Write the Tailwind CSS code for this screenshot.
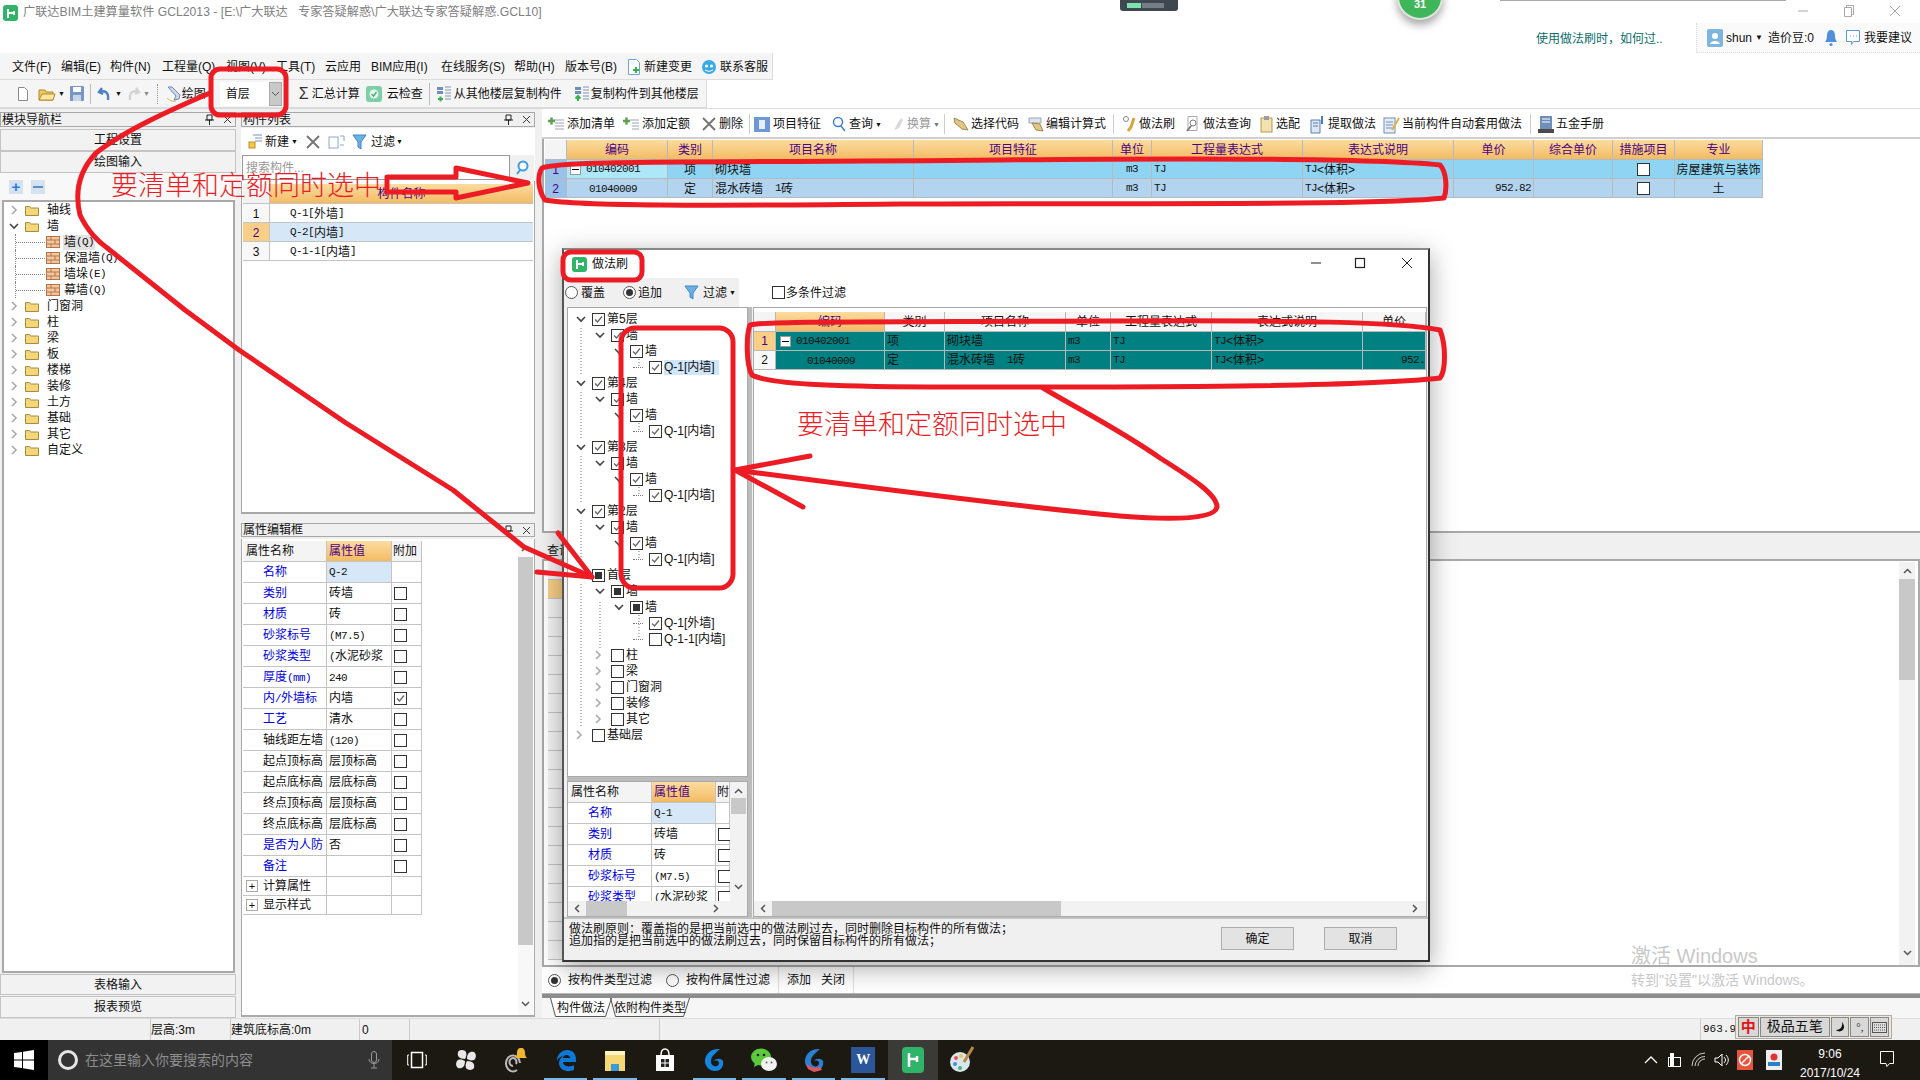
<!DOCTYPE html>
<html lang="zh">
<head>
<meta charset="UTF-8">
<title>广联达BIM土建算量软件 GCL2013</title>
<script src="https://cdn.jsdelivr.net/npm/@tailwindcss/browser@4"></script>
</head>
<body class="w-[1920px] h-[1080px] overflow-hidden relative bg-white text-[12px] leading-none text-[#111] font-['Liberation_Sans','Noto_Sans_CJK_SC',sans-serif]">

<!-- title bar -->
<div class="h-[53px] flex items-start relative">
  <div class="mt-[5px] ml-[3px] w-[15px] h-[16px] rounded-[3px] bg-[#2fb468] flex items-center justify-center">
    <svg width="10" height="11" viewBox="0 0 10 11"><path d="M2 1v9M2 5h6M8 3v4" stroke="#fff" stroke-width="2" fill="none"/></svg>
  </div>
  <div class="ml-[5px] mt-[6px] text-[#808080] text-[12.2px] whitespace-pre">广联达BIM土建算量软件 GCL2013 - [E:\广大联达   专家答疑解惑\广大联达专家答疑解惑.GCL10]</div>
  <!-- window buttons -->
  <div class="absolute top-[4px] left-[1796px] flex items-center gap-[33px] text-[#909090]">
    <svg width="14" height="14" viewBox="0 0 14 14"><path d="M2 7h10" stroke="#aaa"/></svg>
    <svg width="12" height="14" viewBox="0 0 12 14"><path d="M1.500 3.500h7v9h-7zM3.500 3.500v-2h7v9h-2" stroke="#aaa" fill="none"/></svg>
    <svg width="14" height="14" viewBox="0 0 14 14"><path d="M2 2l10 10M12 2L2 12" stroke="#aaa"/></svg>
  </div>
  <div class="absolute left-[1536px] top-[33px] text-[#0c6e6e]">使用做法刷时，如何过..</div>
  <div class="absolute left-[1696px] top-[23px] w-[224px] h-[30px] bg-[#fafafa] border-b border-[#ddd] border-l border-dotted flex items-center pl-[10px] gap-[3px]">
    <svg width="16" height="18" viewBox="0 0 16 18"><rect width="16" height="18" rx="2" fill="#7db5df"/><circle cx="8" cy="7" r="3" fill="#fff"/><path d="M3 15c1-4 9-4 10 0z" fill="#fff"/></svg>
    <span>shun</span><span class="text-[8px]">▼</span><span class="ml-[2px]">造价豆:0</span>
    <svg class="ml-[7px]" width="14" height="18" viewBox="0 0 14 18"><path d="M7 1c3 0 4 3 4 6s1 4 2 6H1c1-2 2-3 2-6s1-6 4-6z" fill="#4f8fdc"/><circle cx="7" cy="15.500" r="1.600" fill="#4f8fdc"/></svg>
    <svg class="ml-[4px]" width="16" height="18" viewBox="0 0 16 18"><path d="M1.500 1.500h13v11h-6l-2 3v-3h-5z" fill="#fff" stroke="#5a9ad8"/><path d="M5 7h1M8 7h1M11 7h1" stroke="#5a9ad8"/></svg>
    <span>我要建议</span>
  </div>
  <!-- desktop widgets poking in at the top -->
  <div class="absolute left-[1120px] top-0 w-[58px] h-[11px] bg-[#3f4750] rounded-b-[3px] flex items-center pl-[7px] gap-[1px]">
    <div class="w-[14px] h-[5px] bg-[#7fe0b0]"></div><div class="w-[22px] h-[5px] bg-[#767d85]"></div>
  </div>
  <div class="absolute left-[1397px] top-[-26px] w-[46px] h-[46px] rounded-full bg-[#3fb65a] border-[2px] border-[#dfe5df] shadow-[0_5px_8px_rgba(0,0,0,0.35)] flex items-end justify-center pb-[8px] text-white text-[11px] font-bold">31</div>
  <div class="absolute left-[1500px] top-0 w-[286px] h-[1px] bg-[#aaa]"></div>
</div>

<!-- menu bar -->
<div class="h-[27px] w-[773px] bg-[#f5f5f5] border-b border-r border-[#dcdcdc] flex items-center pl-[12px] pt-[2px]">
  <span class="w-[49px]">文件(F)</span><span class="w-[49px]">编辑(E)</span><span class="w-[52px]">构件(N)</span><span class="w-[64px]">工程量(Q)</span><span class="w-[50px]">视图(V)</span><span class="w-[49px]">工具(T)</span><span class="w-[46px]">云应用</span><span class="w-[70px]">BIM应用(I)</span><span class="w-[73px]">在线服务(S)</span><span class="w-[51px]">帮助(H)</span><span class="w-[62px]">版本号(B)</span>
  <svg width="14" height="18" viewBox="0 0 14 18"><path d="M1.500 1.500h8l3 3v12h-11z" fill="#fff" stroke="#6aa4d8"/><path d="M6 12h6M9 9v6" stroke="#35b04a" stroke-width="2"/></svg>
  <span class="ml-[3px] w-[57px]">新建变更</span>
  <svg width="16" height="17" viewBox="0 0 16 17"><circle cx="8" cy="8" r="7" fill="#39a9e8"/><circle cx="5.500" cy="7" r="1.600" fill="#fff"/><circle cx="10.500" cy="7" r="1.600" fill="#fff"/><path d="M4 11q4 3 8 0" stroke="#fff" fill="none"/></svg>
  <span class="ml-[3px]">联系客服</span>
</div>

<!-- main toolbar -->
<div class="h-[28px] w-[707px] bg-[#f5f5f5] border-r border-b border-[#dcdcdc] flex items-center pl-[16px]">
  <svg width="14" height="16" viewBox="0 0 14 16"><path d="M2.500 1.500h6l3 3v10h-9z" fill="#fff" stroke="#8a8a8a"/></svg>
  <svg class="ml-[8px]" width="18" height="16" viewBox="0 0 18 16"><path d="M1 4h6l1 2h7v8H1z" fill="#f0c95c" stroke="#b08a2a"/><path d="M4 8h13l-2 6H1z" fill="#fbe7a0" stroke="#b08a2a"/></svg>
  <span class="text-[7px] ml-[2px]">▼</span>
  <svg class="ml-[5px]" width="14" height="15" viewBox="0 0 14 15"><rect width="14" height="15" rx="1" fill="#7b95c4"/><rect x="3" y="1" width="8" height="5" fill="#fff"/><rect x="3" y="9" width="8" height="6" fill="#c7d4ea"/></svg>
  <div class="w-[1px] h-[20px] bg-[#bbb] ml-[6px]"></div>
  <svg class="ml-[6px]" width="15" height="16" viewBox="0 0 15 16"><path d="M5 2L2 6l4 2M2 6c6-2 10 0 9 8" stroke="#4e80c8" stroke-width="2.400" fill="none"/></svg>
  <span class="text-[7px] ml-[3px]">▼</span>
  <svg class="ml-[5px]" width="14" height="16" viewBox="0 0 14 16"><path d="M9 2l3 4-4 2M12 6C6 4 2 6 3 14" stroke="#d4d4d4" stroke-width="2.400" fill="none"/></svg>
  <span class="text-[7px] ml-[2px] text-[#888]">▼</span>
  <div class="w-[1px] h-[20px] border-l border-dotted border-[#999] ml-[7px]"></div>
  <svg class="ml-[7px]" width="18" height="18" viewBox="0 0 18 18"><path d="M3 2l8 9-2 4 5-1 1-4-8-8z" fill="#cdd9ea" stroke="#6d8ab0"/><path d="M2 13c2 2 5 4 9 3" stroke="#e0b050" fill="none"/></svg>
  <span class="ml-[-1px] w-[24px]">绘图</span>
  <div class="w-[64px] h-[24px] bg-white flex items-center pl-[6px] relative ml-[14px]">首层
    <div class="absolute right-[2px] top-[0px] w-[13px] h-[24px] bg-[#c9c9c9] border border-[#aaa] flex items-center justify-center"><svg width="9" height="6" viewBox="0 0 9 6"><path d="M1 1l3.500 3.500L8 1" stroke="#555" fill="none"/></svg></div>
  </div>
  <span class="ml-[15px] text-[16px] text-[#333] w-[13px]">Σ</span>
  <span class="ml-[0px]">汇总计算</span>
  <svg class="ml-[6px]" width="16" height="16" viewBox="0 0 16 16"><rect width="16" height="16" rx="3" fill="#7fcfa6"/><circle cx="8" cy="8" r="4.500" fill="#e9f7ef"/><path d="M5.500 8l2 2 3-4" stroke="#4ab27d" fill="none" stroke-width="1.500"/></svg>
  <span class="ml-[5px]">云检查</span>
  <div class="w-[1px] h-[22px] bg-[#bbb] ml-[6px]"></div>
  <svg class="ml-[6px]" width="16" height="18" viewBox="0 0 16 18"><path d="M1 2h6v3H1zM1 6h6v3H1z" fill="#6e8fb8"/><path d="M9 2h6M9 5h6M9 8h6M9 11h6M9 14h6" stroke="#7f97b8"/><path d="M2 14h5M4.500 11.500v5" stroke="#3bb04e" stroke-width="2"/></svg>
  <span class="ml-[2px]">从其他楼层复制构件</span>
  <svg class="ml-[12px]" width="16" height="18" viewBox="0 0 16 18"><path d="M1 2h6v3H1zM1 6h6v3H1z" fill="#6e8fb8"/><path d="M9 2h6M9 5h6M9 8h6M9 11h6M9 14h6" stroke="#7f97b8"/><path d="M4 16v-5M1.500 13.500L4 11l2.500 2.500" stroke="#3bb04e" stroke-width="2" fill="none"/></svg>
  <span class="ml-[1px]">复制构件到其他楼层</span>
</div>

<!-- work area -->
<div class="h-[910px] flex bg-[#f0f0f0] border-t border-[#d9d9d9]">

  <!-- module nav -->
  <div class="w-[236px] flex flex-col pt-[3px]">
    <div class="h-[15px] border border-[#a8a8a8] flex items-center justify-between pl-[1px] pr-[3px]">
      <span>模块导航栏</span>
      <span class="flex items-center gap-[9px]"><svg width="9" height="11" viewBox="0 0 9 11"><path d="M2 1h5v5H2zM0 6h9M4.500 6v5" stroke="#222" fill="none"/></svg><svg width="9" height="9" viewBox="0 0 9 9"><path d="M1 1l7 7M8 1L1 8" stroke="#333"/></svg></span>
    </div>
    <div class="h-[22px] mt-[2px] border border-[#c4c4c4] bg-[#f2f2f2] flex items-center justify-center">工程设置</div>
    <div class="h-[22px] border border-[#c4c4c4] bg-[#f2f2f2] flex items-center justify-center">绘图输入</div>
    <div class="h-[27px] flex items-center pl-[9px] gap-[8px] bg-[#f8f8f8]">
      <div class="w-[14px] h-[14px] bg-[#d5e2f2] text-[#2a7fd6] flex items-center justify-center text-[15px] font-bold">+</div>
      <div class="w-[14px] h-[14px] bg-[#d5e2f2] flex items-center justify-center"><div class="w-[10px] h-[2px] bg-[#5f8fc4]"></div></div>
    </div>
    <div id="nav-tree" class="h-[773px] ml-[2px] mr-[1px] bg-white border-2 border-[#a9a9a9]"></div>
    <div class="h-[21px] mt-[1px] border border-[#c4c4c4] bg-[#f2f2f2] flex items-center justify-center">表格输入</div>
    <div class="h-[22px] mt-[1px] border border-[#c4c4c4] bg-[#f2f2f2] flex items-center justify-center">报表预览</div>
  </div>

  <!-- component list and properties -->
  <div class="w-[294px] ml-[5px] flex flex-col pt-[3px]">
    <div class="h-[15px] border border-[#a8a8a8] flex items-center justify-between pl-[1px] pr-[3px]">
      <span>构件列表</span>
      <span class="flex items-center gap-[9px]"><svg width="9" height="11" viewBox="0 0 9 11"><path d="M2 1h5v5H2zM0 6h9M4.500 6v5" stroke="#222" fill="none"/></svg><svg width="9" height="9" viewBox="0 0 9 9"><path d="M1 1l7 7M8 1L1 8" stroke="#333"/></svg></span>
    </div>
    <div class="h-[27px] mt-[1px] bg-white flex items-center pl-[7px]">
      <svg width="16" height="18" viewBox="0 0 16 18"><path d="M5 2h9M7 5h7M7 8h7" stroke="#7592b8"/><rect x="1" y="9" width="6" height="6" fill="#f2c84b" stroke="#b98f22"/></svg>
      <span class="ml-[1px]">新建</span><span class="text-[7px] ml-[2px]">▼</span>
      <svg class="ml-[8px]" width="14" height="14" viewBox="0 0 14 14"><path d="M1 1l12 12M13 1L1 13" stroke="#777" stroke-width="2"/></svg>
      <svg class="ml-[8px]" width="17" height="16" viewBox="0 0 17 16"><rect x="1" y="3" width="9" height="11" fill="#fff" stroke="#8ba7c8"/><path d="M12 2h4M16 2v5M12 11h4" stroke="#8ba7c8"/></svg>
      <svg class="ml-[7px]" width="15" height="16" viewBox="0 0 15 16"><path d="M1 1h13L9 8v7l-3-2V8z" fill="#6cb0e8" stroke="#3d86c6"/></svg>
      <span class="ml-[4px]">过滤</span><span class="text-[7px] ml-[1px]">▼</span>
    </div>
    <div class="h-[26px] bg-white flex items-stretch pb-[1px]">
      <div class="w-[268px] ml-[1px] border border-[#999] text-[#999] flex items-center pl-[3px] bg-white">搜索构件...</div>
      <div class="w-[24px] bg-[#f0f0f0] flex items-center justify-center"><svg width="14" height="16" viewBox="0 0 14 16"><circle cx="8" cy="6" r="4.500" fill="#fff" stroke="#3e9ee0" stroke-width="2"/><path d="M5 10l-3 4" stroke="#3e9ee0" stroke-width="2"/></svg></div>
    </div>
    <div class="h-[333px] bg-white border-b-2 border-x border-[#a9a9a9] px-[1px] pt-[3px]">
      <div class="grid grid-cols-[27px_1fr] text-center">
        <div class="h-[20px] bg-[#f2f2f2] border-r border-b border-[#c4c4c4]"></div>
        <div class="h-[20px] bg-gradient-to-b from-[#fbdc9f] to-[#f3bb62] border-b border-[#c4c4c4] flex items-center justify-center text-[#4b0082]">构件名称</div>
        <div class="h-[19px] bg-[#f8f8f8] border-r border-b border-[#c4c4c4] flex items-center justify-center pt-[1px]">1</div>
        <div class="h-[19px] bg-white border-b border-[#c4c4c4] flex items-center text-left pl-[20px] pt-[1px]"><span class="font-['Liberation_Mono'] text-[11px] tracking-[-0.6px]">Q-1[</span>外墙<span class="font-['Liberation_Mono'] text-[11px]">]</span></div>
        <div class="h-[19px] bg-[#f9cf87] border-r border-b border-[#c4c4c4] flex items-center justify-center text-[#4b0082] pt-[1px]">2</div>
        <div class="h-[19px] bg-[#d6e8f7] border-b border-[#c4c4c4] flex items-center pl-[20px] pt-[1px]"><span class="font-['Liberation_Mono'] text-[11px] tracking-[-0.6px]">Q-2[</span>内墙<span class="font-['Liberation_Mono'] text-[11px]">]</span></div>
        <div class="h-[19px] bg-[#f8f8f8] border-r border-b border-[#c4c4c4] flex items-center justify-center pt-[1px]">3</div>
        <div class="h-[19px] bg-white border-b border-[#c4c4c4] flex items-center pl-[20px] pt-[1px]"><span class="font-['Liberation_Mono'] text-[11px] tracking-[-0.6px]">Q-1-1[</span>内墙<span class="font-['Liberation_Mono'] text-[11px]">]</span></div>
      </div>
    </div>
    <div class="h-[14px] mt-[9px] border border-[#a8a8a8] flex items-center justify-between pl-[1px] pr-[3px]">
      <span>属性编辑框</span>
      <span class="flex items-center gap-[9px]"><svg width="9" height="11" viewBox="0 0 9 11"><path d="M2 1h5v5H2zM0 6h9M4.500 6v5" stroke="#222" fill="none"/></svg><svg width="9" height="9" viewBox="0 0 9 9"><path d="M1 1l7 7M8 1L1 8" stroke="#333"/></svg></span>
    </div>
    <div class="flex-1 mt-[2px] bg-white border-x border-b-2 border-[#a9a9a9] pl-[1px] pt-[2px] flex relative mb-[1px]">
      <div id="prop-main" class="w-[179px]"></div>
      <div class="absolute right-[1px] top-0 bottom-0 w-[15px] bg-[#f8f8f8] flex flex-col items-center">
        <svg class="mt-[7px]" width="9" height="6" viewBox="0 0 9 6"><path d="M1 5l3.500-3.500L8 5" stroke="#555" stroke-width="1.500" fill="none"/></svg>
        <div class="w-[15px] h-[388px] mt-[5px] bg-[#c8c8c8]"></div>
        <svg class="mt-[56px]" width="9" height="6" viewBox="0 0 9 6"><path d="M1 1l3.500 3.500L8 1" stroke="#555" stroke-width="1.500" fill="none"/></svg>
      </div>
    </div>
  </div>

  <!-- quantity panels -->
  <div class="flex-1 ml-[7px] flex flex-col bg-[#f0f0f0]">
    <div class="h-[30px] bg-white border-b-2 border-[#cfcfcf] flex items-center pl-[5px] pt-[2px]">
      <svg width="17" height="16" viewBox="0 0 17 16"><path d="M5 4h12M8 7h9M8 10h9M8 13h9" stroke="#98a6b8"/><path d="M1 5h7M4.500 1.500v7" stroke="#5ea04e" stroke-width="2.500"/></svg>
      <span class="ml-[3px]">添加清单</span>
      <svg class="ml-[8px]" width="16" height="16" viewBox="0 0 16 16"><path d="M7 4h9M9 7h7M9 10h7M9 13h7" stroke="#98a6b8"/><path d="M0 5h7M3.500 1.500v7" stroke="#5ea04e" stroke-width="2.500"/></svg>
      <span class="ml-[3px]">添加定额</span>
      <svg class="ml-[12px]" width="14" height="14" viewBox="0 0 14 14"><path d="M1 1l12 12M13 1L1 13" stroke="#777" stroke-width="2"/></svg>
      <span class="ml-[3px]">删除</span>
      <div class="w-[1px] h-[20px] bg-[#ccc] ml-[6px]"></div>
      <svg class="ml-[4px]" width="16" height="15" viewBox="0 0 16 15"><rect width="16" height="15" fill="#6d97d6"/><rect x="5" y="3" width="6" height="9" fill="#e8eef8"/></svg>
      <span class="ml-[3px]">项目特征</span>
      <svg class="ml-[11px]" width="15" height="16" viewBox="0 0 15 16"><circle cx="6" cy="6" r="4.500" fill="none" stroke="#3d7fd0" stroke-width="1.500"/><path d="M9 10l4 5" stroke="#3d7fd0" stroke-width="1.500"/></svg>
      <span class="ml-[2px]">查询</span><span class="text-[7px] ml-[2px]">▼</span>
      <svg class="ml-[10px]" width="13" height="14" viewBox="0 0 13 14"><path d="M2 13l5-9 2-3 2 2-4 8z" fill="#d8d8d8"/></svg>
      <span class="ml-[2px] text-[#999]">换算</span><span class="text-[7px] ml-[2px] text-[#777]">▼</span>
      <div class="w-[1px] h-[20px] bg-[#ccc] ml-[4px]"></div>
      <svg class="ml-[7px]" width="18" height="16" viewBox="0 0 18 16"><path d="M2 2l9 4 5 8-6-1-7-6z" fill="#e4c680" stroke="#9a8a5a"/></svg>
      <span class="ml-[1px]">选择代码</span>
      <svg class="ml-[9px]" width="17" height="16" viewBox="0 0 17 16"><path d="M1 2h12v5H1z" fill="#dfe4ea" stroke="#9aa7b6"/><path d="M4 7l8 1 3 7-7-1z" fill="#e4c680" stroke="#9a8a5a"/></svg>
      <span class="ml-[1px]">编辑计算式</span>
      <div class="w-[1px] h-[20px] bg-[#ccc] ml-[7px]"></div>
      <svg class="ml-[7px]" width="17" height="18" viewBox="0 0 17 18"><circle cx="5" cy="4" r="2.500" fill="#fff" stroke="#888"/><path d="M13 3l-3 9-3 4" stroke="#d3a93f" stroke-width="3" fill="none"/></svg>
      <span class="ml-[1px]">做法刷</span>
      <svg class="ml-[10px]" width="16" height="18" viewBox="0 0 16 18"><path d="M3 1.500h9v14h-9z" fill="#fff" stroke="#aaa"/><circle cx="8" cy="8" r="3" fill="none" stroke="#7a7a7a"/><path d="M6 11l-4 5" stroke="#7a7a7a" stroke-width="2"/></svg>
      <span class="ml-[2px]">做法查询</span>
      <svg class="ml-[8px]" width="15" height="18" viewBox="0 0 15 18"><rect x="2" y="3" width="11" height="14" fill="#f2e2b0" stroke="#b59a50"/><rect x="5" y="1" width="5" height="4" fill="#9c9c9c"/></svg>
      <span class="ml-[2px]">选配</span>
      <svg class="ml-[9px]" width="17" height="19" viewBox="0 0 17 19"><path d="M2 5h9v13H2z" fill="#dde6f3" stroke="#5d7fb0"/><path d="M4 8h5M4 11h5" stroke="#5d7fb0"/><path d="M13 1v8" stroke="#3d7fd0" stroke-width="2"/></svg>
      <span class="ml-[2px]">提取做法</span>
      <svg class="ml-[7px]" width="18" height="19" viewBox="0 0 18 19"><rect x="1" y="3" width="11" height="15" fill="#e8eef8" stroke="#6d8fc0"/><path d="M3 7h7M3 10h7M3 13h7" stroke="#6d8fc0"/><path d="M9 15l7-12" stroke="#e0b040" stroke-width="2"/></svg>
      <span class="ml-[1px]">当前构件自动套用做法</span>
      <div class="w-[1px] h-[20px] bg-[#ccc] ml-[8px]"></div>
      <svg class="ml-[7px]" width="16" height="19" viewBox="0 0 16 19"><rect x="2" y="1" width="12" height="17" fill="#6f8fb8"/><path d="M4 4h8M4 7h8" stroke="#fff"/><rect x="0" y="14" width="16" height="4" fill="#4a4a4a"/></svg>
      <span class="ml-[2px]">五金手册</span>
    </div>
    <div class="h-[394px] bg-white border-b-2 border-l-2 border-[#a9a9a9] pl-[1px] pt-[1px]">
      <div id="top-grid" class="grid grid-cols-[22px_101px_45px_201px_199px_39px_151px_151px_80px_79px_62px_88px] w-[1218px]"></div>
    </div>
    <div class="h-[26px] flex items-end"><span class="ml-[5px] mb-[2px]">查询</span></div>
    <div class="h-[408px] bg-white border-2 border-[#a9a9a9] relative">
      <div id="low-grid" class="w-[785px] ml-[4px] grid grid-cols-[16px_769px]"></div>
      <div class="absolute right-[3px] top-[1px] bottom-0 w-[16px] bg-[#f2f2f2] flex flex-col items-center">
        <svg class="mt-[6px]" width="9" height="6" viewBox="0 0 9 6"><path d="M1 5l3.500-3.500L8 5" stroke="#555" stroke-width="1.500" fill="none"/></svg>
        <div class="w-[16px] h-[101px] mt-[5px] bg-[#c8c8c8]"></div>
        <svg class="mt-[270px]" width="9" height="6" viewBox="0 0 9 6"><path d="M1 1l3.500 3.500L8 1" stroke="#555" stroke-width="1.500" fill="none"/></svg>
      </div>
    </div>
    <div class="h-[26px] bg-white flex items-center pl-[6px]">
      <div class="w-[13px] h-[13px] rounded-full border border-[#555] flex items-center justify-center"><div class="w-[7px] h-[7px] rounded-full bg-[#333]"></div></div>
      <span class="ml-[7px]">按构件类型过滤</span>
      <div class="ml-[14px] w-[13px] h-[13px] rounded-full border border-[#555]"></div>
      <span class="ml-[7px]">按构件属性过滤</span>
      <div class="ml-[8px] h-[26px] w-[1px] bg-[#ddd]"></div>
      <span class="ml-[8px]">添加</span>
      <span class="ml-[10px]">关闭</span>
      <div class="ml-[8px] h-[26px] w-[1px] bg-[#ddd]"></div>
    </div>
    <div class="h-[5px] bg-[#8d8d8d] border-t border-[#b5b5b5]"></div>
    <div class="flex-1 bg-[#f6f6f6] flex items-stretch pl-[8px]">
      <div class="w-[62px] relative flex items-center justify-center">
        <svg class="absolute left-0 top-0" width="62" height="19" viewBox="0 0 62 19"><path d="M.5 0l5 18.500h50l6-18.500" fill="#fff" stroke="#555"/></svg>
        <span class="relative">构件做法</span>
      </div>
      <div class="w-[80px] ml-[-2px] relative flex items-center justify-center">
        <svg class="absolute left-0 top-0" width="80" height="19" viewBox="0 0 80 19"><path d="M.5 0l5 18.500h68l6-18.500" fill="none" stroke="#555"/></svg>
        <span class="relative">依附构件类型</span>
      </div>
    </div>
  </div>
</div>

<!-- status bar -->
<div class="h-[22px] bg-[#f0f0f0] border-t border-[#ddd] flex items-stretch">
  <div class="w-[150px]"></div>
  <div class="w-[80px] border-l border-[#ccc] flex items-center">层高:3m</div>
  <div class="w-[129px] border-l border-[#ccc] flex items-center">建筑底标高:0m</div>
  <div class="w-[50px] border-l border-[#ccc] flex items-center pl-[2px]">0</div>
  <div class="w-[250px] border-l border-[#ccc]"></div>
  <div class="w-[1041px] border-l border-[#ccc]"></div>
  <div class="border-l border-[#ccc] flex items-center pl-[2px] font-['Liberation_Mono'] text-[11px]">963.9E</div>
</div>

<!-- taskbar -->
<div class="h-[40px] bg-[#1c1812] flex items-stretch relative text-white">
  <div class="w-[48px] bg-black flex items-center justify-center">
    <svg width="20" height="20" viewBox="0 0 20 20"><path d="M0 3l8-1v7.500H0zM9 1.800L20 0v9.500H9zM0 10.500h8V18l-8-1zM9 10.500h11V20L9 18.200z" fill="#fff"/></svg>
  </div>
  <div class="w-[344px] bg-[#333] flex items-center pl-[10px] relative">
    <div class="w-[20px] h-[20px] rounded-full border-[3px] border-[#e6e6e6]"></div>
    <span class="ml-[7px] text-[14px] text-[#8d8d8d]">在这里输入你要搜索的内容</span>
    <svg class="absolute right-[12px] top-[11px]" width="12" height="18" viewBox="0 0 12 18"><rect x="3.500" y="0.500" width="5" height="11" rx="2.500" fill="none" stroke="#999"/><path d="M1 8c0 6 10 6 10 0M6 13v4M3 17h6" stroke="#999" fill="none"/></svg>
  </div>
  <div class="flex">
    <div class="w-[49.6px] flex items-center justify-center"><svg width="20" height="18" viewBox="0 0 20 18"><rect x="4.500" y="1.500" width="11" height="15" fill="none" stroke="#fff" stroke-width="1.500"/><path d="M2 4H.7v10H2M18 4h1.300v10H18" stroke="#fff" fill="none"/></svg></div>
    <div class="w-[49.6px] flex items-center justify-center"><svg width="22" height="22" viewBox="0 0 22 22"><path d="M10 10C4 10 2 7 3 3c2-3 7-2 8 0 1 3 0 5-1 7zM12 10c0-6 3-8 7-7 3 2 2 7 0 8-3 1-5 0-7-1zM12 12c6 0 8 3 7 7-2 3-7 2-8 0-1-3 0-5 1-7zM10 12c0 6-3 8-7 7-3-2-2-7 0-8 3-1 5 0 7 1z" fill="#e8e8e8"/></svg></div>
    <div class="w-[49.6px] flex items-center justify-center relative"><svg width="24" height="28" viewBox="0 0 24 28"><path d="M17 14a7 8 0 1 0-3 7M13 15a3.500 4 0 1 0-3 2" stroke="#bbb" stroke-width="2" fill="none" transform="translate(-1 3)"/><path d="M17 2c3 0 4 2 4 5s1 4 2 5H11c1-1 2-2 2-5s1-5 4-5z" fill="#f2b530"/></svg></div>
    <div class="w-[49.6px] flex items-center justify-center relative"><svg width="24" height="24" viewBox="0 0 24 24"><path d="M3 13C3 6 8 2 13 2c6 0 9 4 9 10v2H9c0 4 6 6 11 3v5c-7 3-15 0-15-7 0-3 2-6 5-7-3 0-6 2-7 5zM9 10h7c0-4-7-4-7 0z" fill="#0d79d6"/></svg><div class="absolute bottom-0 left-[3px] right-[3px] h-[2px] bg-[#76b9ed]"></div></div>
    <div class="w-[49.6px] flex items-center justify-center relative"><svg width="22" height="24" viewBox="0 0 22 24"><path d="M1 3h20v20H1z" fill="#f7d774"/><path d="M1 3h20v4H1z" fill="#fff3c2"/><path d="M7 23v-7h8v7z" fill="#3a9ad9"/></svg><div class="absolute bottom-0 left-[3px] right-[3px] h-[2px] bg-[#76b9ed]"></div></div>
    <div class="w-[49.6px] flex items-center justify-center"><svg width="20" height="24" viewBox="0 0 20 24"><path d="M1 7h18v16H1z" fill="#fff"/><path d="M6 7c0-8 8-8 8 0" stroke="#fff" stroke-width="1.500" fill="none"/><rect x="6" y="11" width="3.500" height="3.500" fill="#222"/><rect x="10.500" y="11" width="3.500" height="3.500" fill="#222"/><rect x="6" y="15.500" width="3.500" height="3.500" fill="#222"/><rect x="10.500" y="15.500" width="3.500" height="3.500" fill="#222"/></svg></div>
    <div class="w-[49.6px] flex items-center justify-center relative"><svg width="24" height="26" viewBox="0 0 24 26"><path d="M18 2C9 1 3 7 3 14c0 6 5 10 10 10 6 0 9-5 8-10-2-3-7-3-9 0 3-1 5 0 5 2 0 3-3 4-5 3-3-1-4-5-2-9 2-3 5-5 8-8z" fill="#1387e0"/></svg><div class="absolute bottom-0 left-[3px] right-[3px] h-[2px] bg-[#76b9ed]"></div></div>
    <div class="w-[49.6px] flex items-center justify-center relative"><svg width="28" height="26" viewBox="0 0 28 26"><ellipse cx="11" cy="10" rx="10" ry="8.500" fill="#5cc83c"/><path d="M5 15l-1 5 6-3z" fill="#5cc83c"/><ellipse cx="19" cy="17" rx="8" ry="7" fill="#f2f2f2"/><circle cx="8" cy="8" r="1.300" fill="#222"/><circle cx="14" cy="8" r="1.300" fill="#222"/><circle cx="16.500" cy="15.500" r="1" fill="#666"/><circle cx="21.500" cy="15.500" r="1" fill="#666"/></svg><div class="absolute bottom-0 left-[3px] right-[3px] h-[2px] bg-[#76b9ed]"></div></div>
    <div class="w-[49.6px] flex items-center justify-center relative"><svg width="24" height="26" viewBox="0 0 24 26"><path d="M18 2C9 1 3 7 3 14c0 6 5 10 10 10 6 0 9-5 8-10-2-3-7-3-9 0 3-1 5 0 5 2 0 3-3 4-5 3-3-1-4-5-2-9 2-3 5-5 8-8z" fill="#2a7fd0"/><path d="M4 16c3 4 9 6 14 4l2 3-8 2-6-3z" fill="#e0565f"/></svg><div class="absolute bottom-0 left-[3px] right-[3px] h-[2px] bg-[#76b9ed]"></div></div>
    <div class="w-[49.6px] flex items-center justify-center relative"><div class="w-[24px] h-[26px] bg-[#2b579a] flex items-center justify-center text-[14px] font-bold text-white font-['Liberation_Serif']">W</div><div class="absolute bottom-0 left-[3px] right-[3px] h-[2px] bg-[#76b9ed]"></div></div>
    <div class="w-[49.6px] bg-[#3b3a37] flex items-center justify-center relative"><div class="w-[22px] h-[26px] rounded-[4px] bg-[#2fb56a] flex items-center justify-center"><svg width="14" height="16" viewBox="0 0 14 16"><path d="M3 1v14M3 7h8M11 4v6" stroke="#fff" stroke-width="2.500" fill="none"/></svg></div></div>
    <div class="w-[49.6px] flex items-center justify-center"><svg width="26" height="28" viewBox="0 0 26 28"><ellipse cx="11" cy="16" rx="10" ry="10" fill="#d8e6ef"/><circle cx="7" cy="12" r="2" fill="#e25757"/><circle cx="12" cy="10" r="2" fill="#f2c84b"/><circle cx="6" cy="18" r="2" fill="#3d8fe0"/><circle cx="11" cy="22" r="2" fill="#4ab27d"/><path d="M24 1L15 16" stroke="#b88a4a" stroke-width="3"/></svg></div>
  </div>
  <!-- tray -->
  <div class="absolute left-[1644px] top-0 h-[40px] flex items-center">
    <svg width="14" height="10" viewBox="0 0 14 10"><path d="M1 8l6-6 6 6" stroke="#fff" fill="none" stroke-width="1.300"/></svg>
    <svg class="ml-[9px]" width="15" height="16" viewBox="0 0 15 16"><rect x="1.500" y="5.500" width="12" height="9" fill="none" stroke="#fff"/><rect x="3" y="1" width="4" height="13" fill="#fff"/></svg>
    <svg class="ml-[9px]" width="15" height="16" viewBox="0 0 15 16"><path d="M1 14a13 13 0 0 1 13-13M4 14A10 10 0 0 1 14 4.500M7 14a7 7 0 0 1 7-7" stroke="#ccc" fill="none"/></svg>
    <svg class="ml-[8px]" width="16" height="16" viewBox="0 0 16 16"><path d="M1 6h3l4-4v12l-4-4H1z" fill="none" stroke="#fff"/><path d="M10 5c2 2 2 4 0 6M12 3c3 3 3 7 0 10" stroke="#fff" fill="none"/></svg>
    <svg class="ml-[7px]" width="16" height="20" viewBox="0 0 16 20"><rect width="16" height="20" fill="#e8553e"/><circle cx="8" cy="10" r="5.500" fill="none" stroke="#fff" stroke-width="1.500"/><path d="M4 14l8-8" stroke="#fff" stroke-width="1.500"/></svg>
    <svg class="ml-[13px]" width="16" height="20" viewBox="0 0 16 20"><rect width="16" height="20" fill="#eee"/><circle cx="8" cy="7" r="3.500" fill="#d33"/><rect x="2" y="12" width="12" height="4" fill="#2a7fc8"/></svg>
  </div>
  <div class="absolute left-[1787px] top-[5px] w-[86px] text-center text-[12px] leading-[19px]"><div>9:06</div><div>2017/10/24</div></div>
  <svg class="absolute left-[1879px] top-[10px]" width="16" height="18" viewBox="0 0 16 18"><path d="M1.500 1.500h13v12h-4l-2.500 3-1-3h-5.500z" fill="none" stroke="#fff"/></svg>
</div>

<!-- windows activation watermark -->
<div class="absolute left-[1631px] top-[946px] text-[20px] text-[#c8c8c8]">激活 Windows</div>
<div class="absolute left-[1631px] top-[973px] text-[14px] text-[#c8c8c8]">转到"设置"以激活 Windows。</div>

<!-- IME bar -->
<div class="absolute left-[1735px] top-[1015px] w-[157px] h-[24px] bg-[#ece9d8] border border-[#aaa] flex items-center px-[2px] gap-[1px] z-20 font-['Liberation_Serif','Noto_Sans_CJK_SC',serif]">
  <div class="w-[21px] h-[20px] bg-[#d8d8d8] border border-[#888] flex items-center justify-center text-[#e01515] text-[15px] font-bold">中</div>
  <div class="w-[71px] h-[20px] bg-[#d8d8d8] border border-[#888] flex items-center justify-center text-[14px]">极品五笔</div>
  <div class="w-[19px] h-[20px] bg-[#d8d8d8] border border-[#888] flex items-center justify-center"><svg width="10" height="12" viewBox="0 0 10 12"><path d="M7 1c1 5-2 8-6 8 3 3 8 1 8-3 0-2-1-4-2-5z" fill="#111"/></svg></div>
  <div class="w-[19px] h-[20px] bg-[#d8d8d8] border border-[#888] flex items-center justify-center text-[11px]">°,</div>
  <div class="w-[19px] h-[20px] bg-[#d8d8d8] border border-[#888] flex items-center justify-center"><svg width="15" height="11" viewBox="0 0 15 11"><rect x=".5" y=".5" width="14" height="10" fill="#ddd" stroke="#555"/><path d="M2 3h11M2 5.500h11M2 8h11" stroke="#555" stroke-dasharray="1 1"/></svg></div>
</div>

<!-- 做法刷 dialog -->
<div class="absolute left-[562px] top-[248px] w-[868px] h-[714px] bg-[#f0f0f0] border-2 border-[#333] border-t-[#888] border-l-[#555] shadow-[0_6px_24px_rgba(0,0,0,0.35)] flex flex-col z-10">
  <div class="h-[28px] bg-white flex items-center relative">
    <div class="ml-[8px] w-[15px] h-[15px] rounded-[3px] bg-[#2fb468] flex items-center justify-center"><svg width="10" height="11" viewBox="0 0 10 11"><path d="M2 1v9M2 5h6M8 3v4" stroke="#fff" stroke-width="2" fill="none"/></svg></div>
    <span class="ml-[5px]">做法刷</span>
    <svg class="absolute left-[745px] top-[6px]" width="14" height="14" viewBox="0 0 14 14"><path d="M2 7h10" stroke="#222"/></svg>
    <svg class="absolute left-[789px] top-[6px]" width="14" height="14" viewBox="0 0 14 14"><rect x="2.500" y="2.500" width="9" height="9" fill="none" stroke="#222" stroke-width="1.200"/></svg>
    <svg class="absolute left-[836px] top-[6px]" width="14" height="14" viewBox="0 0 14 14"><path d="M2 2l10 10M12 2L2 12" stroke="#222"/></svg>
  </div>
  <div class="h-[29px] flex">
    <div class="w-[175px] bg-[#f0f0f0] flex items-center pl-[1px]">
      <div class="w-[13px] h-[13px] rounded-full border border-[#555] bg-white"></div>
      <span class="ml-[3px]">覆盖</span>
      <div class="ml-[18px] w-[13px] h-[13px] rounded-full border border-[#555] bg-white flex items-center justify-center"><div class="w-[7px] h-[7px] rounded-full bg-[#333]"></div></div>
      <span class="ml-[2px]">追加</span>
      <svg class="ml-[22px]" width="15" height="15" viewBox="0 0 15 15"><path d="M1 1h13L9 8v6l-3-2V8z" fill="#6cb0e8" stroke="#3d86c6"/></svg>
      <span class="ml-[4px]">过滤</span><span class="text-[7px] ml-[2px]">▼</span>
    </div>
    <div class="flex-1 bg-white flex items-center pl-[33px]">
      <div class="w-[13px] h-[13px] border border-[#333] bg-white"></div><span class="ml-[1px]">多条件过滤</span>
    </div>
  </div>
  <div class="h-[610px] flex">
    <!-- left: tree and property grid -->
    <div class="w-[186px] ml-[3px] flex flex-col border-r-[4px] border-[#bcbcbc]">
      <div class="h-[470px] bg-white border border-[#a9a9a9] relative">
        <svg class="absolute left-0 top-0" width="120" height="440" viewBox="0 0 120 440" fill="none" stroke="#777" stroke-dasharray="1 2">
          <path d="M13 20v46M13 84v46M13 148v46M13 212v46M13 276v144M32 294v48"/>
          <path d="M71 51v8M71 115v8M71 179v8M71 243v8M71 307v24"/>
        </svg>
        <div id="brush-tree" class="pt-[3px] relative"></div>
      </div>
      <div class="h-[4px] bg-[#bcbcbc]"></div>
      <div class="flex-1 bg-white border border-[#a9a9a9] relative overflow-hidden">
        <div id="prop-dialog" class="w-[162px]"></div>
        <div class="absolute right-0 top-0 w-[17px] h-[119px] bg-[#f2f2f2] flex flex-col items-center">
          <svg class="mt-[6px]" width="9" height="6" viewBox="0 0 9 6"><path d="M1 5l3.500-3.500L8 5" stroke="#555" stroke-width="1.500" fill="none"/></svg>
          <div class="w-[15px] h-[16px] mt-[4px] bg-[#c8c8c8]"></div>
          <svg class="mt-[70px]" width="9" height="6" viewBox="0 0 9 6"><path d="M1 1l3.500 3.500L8 1" stroke="#555" stroke-width="1.500" fill="none"/></svg>
        </div>
        <div class="absolute left-0 right-0 bottom-0 h-[15px] bg-[#f2f2f2] flex items-center pl-[6px]">
          <svg width="6" height="9" viewBox="0 0 6 9"><path d="M5 1L1.500 4.500 5 8" stroke="#555" stroke-width="1.500" fill="none"/></svg>
          <div class="w-[41px] h-[15px] ml-[6px] bg-[#c8c8c8]"></div>
          <svg class="ml-[86px]" width="6" height="9" viewBox="0 0 6 9"><path d="M1 1l3.500 3.500L1 8" stroke="#555" stroke-width="1.500" fill="none"/></svg>
        </div>
      </div>
    </div>
    <!-- right: selected items -->
    <div class="flex-1 flex flex-col ml-[1px] bg-white border border-[#a9a9a9] mr-[1px]">
      <div class="flex-1 pt-[4px]">
        <div id="brush-grid" class="grid grid-cols-[22px_109px_60px_121px_45px_101px_151px_63px] w-[672px]"></div>
      </div>
      <div class="h-[15px] bg-[#f2f2f2] flex items-center pl-[6px]">
        <svg width="6" height="9" viewBox="0 0 6 9"><path d="M5 1L1.500 4.500 5 8" stroke="#555" stroke-width="1.500" fill="none"/></svg>
        <div class="w-[289px] h-[15px] ml-[6px] bg-[#c8c8c8]"></div>
        <svg class="ml-[351px]" width="6" height="9" viewBox="0 0 6 9"><path d="M1 1l3.500 3.500L1 8" stroke="#555" stroke-width="1.500" fill="none"/></svg>
      </div>
    </div>
  </div>
  <div class="flex-1 flex border-t-2 border-[#c2c2c2] relative">
    <div class="pl-[5px] pt-[4px] text-[12px] leading-[12px]">
      <div>做法刷原则：覆盖指的是把当前选中的做法刷过去，同时删除目标构件的所有做法；</div>
      <div>追加指的是把当前选中的做法刷过去，同时保留目标构件的所有做法；</div>
    </div>
    <div class="absolute left-[657px] top-[8px] w-[73px] h-[23px] bg-[#e3e3e3] border border-[#adadad] flex items-center justify-center">确定</div>
    <div class="absolute left-[760px] top-[8px] w-[73px] h-[23px] bg-[#e3e3e3] border border-[#adadad] flex items-center justify-center">取消</div>
  </div>
</div>

<!-- hand-drawn annotations -->
<div class="absolute left-[111px] top-[167px] z-30 text-[27px] leading-[34px] text-[#ed1c24] whitespace-nowrap font-['Noto_Sans_CJK_SC',sans-serif] font-light">要清单和定额同时选中</div>
<div class="absolute left-[797px] top-[406px] z-30 text-[27px] leading-[34px] text-[#ed1c24] whitespace-nowrap font-['Noto_Sans_CJK_SC',sans-serif] font-light">要清单和定额同时选中</div>
<svg class="absolute left-0 top-0 z-30 pointer-events-none" width="1920" height="1080" viewBox="0 0 1920 1080" fill="none" stroke="#ed1c24" stroke-width="5" stroke-linecap="round" stroke-linejoin="round">
  <rect x="211" y="69" width="75" height="46" rx="9"/>
  <path d="M210 93C175 108 125 130 96 153C80 170 74 190 80 215C88 232 100 243 106 247L185 310L239 350L346 423L453 490L524 547L592 577"/>
  <path d="M558 533L592 577L537 572"/>
  <path d="M387 177H456V168L528 183L456 198V192H387Z"/>
  <path d="M542 168C560 160 700 163 1000 160C1200 158 1370 158 1440 165C1447 172 1447 190 1444 198C1380 205 1200 203 900 204C700 206 580 206 545 200C538 190 537 176 542 168Z"/>
  <rect x="563" y="252" width="79" height="28" rx="8"/>
  <rect x="621" y="328" width="112" height="260" rx="14"/>
  <path d="M750 325C760 321 900 322 1100 321C1300 320 1400 322 1440 330C1446 345 1446 370 1440 378C1350 388 1100 387 950 387C850 387 770 385 752 375C746 365 746 335 750 325Z"/>
  <path d="M810 456L735 470L803 507"/>
  <path d="M735 470C850 485 1000 505 1120 516C1170 520 1215 520 1217 507C1217 495 1195 480 1160 458C1120 430 1080 410 1043 388"/>
</svg>

<script>
  const check = '<svg width="11" height="11" viewBox="0 0 11 11"><path d="M2 5.500l2.500 2.500L9 2.500" stroke="#666" stroke-width="1.300" fill="none"/></svg>'
  const chevDown = '<svg width="10" height="7" viewBox="0 0 10 7"><path d="M1 1l4 4 4-4" stroke="#444" stroke-width="1.600" fill="none"/></svg>'
  const chevRight = '<svg width="7" height="10" viewBox="0 0 7 10"><path d="M1 1l4 4-4 4" stroke="#aaa" stroke-width="1.600" fill="none"/></svg>'

  // latin runs in the old grid font are 6px wide per character
  function lat(s) {
    return s.replace(/[\x21-\x7e]+/g, m => '<span class="font-[\'Liberation_Mono\'] text-[11px] tracking-[-0.6px]">' + m + '</span>')
  }

  function box(state) {
    if (state == 1) return '<span class="w-[13px] h-[13px] shrink-0 border border-[#333] bg-white flex items-center justify-center">' + check + '</span>'
    if (state == 2) return '<span class="w-[13px] h-[13px] shrink-0 border border-[#333] bg-white flex items-center justify-center"><span class="w-[7px] h-[7px] bg-[#333]"></span></span>'
    return '<span class="block w-[13px] h-[13px] shrink-0 border border-[#333] bg-white"></span>'
  }

  // module nav tree
  const folder = '<svg width="14" height="12" viewBox="0 0 14 12"><path d="M.5 2.500h4l1 1.500h8v7.500H.5z" fill="#f3d67a" stroke="#a98b3c"/></svg>'
  const wallIcon = '<svg width="14" height="12" viewBox="0 0 14 12"><rect x=".5" y=".5" width="13" height="11" fill="#f0c8a0" stroke="#b5744a"/><path d="M1 4h12M1 8h12M5 1v3M9 4v4M5 8v3" stroke="#b5744a"/></svg>'
  const nav = [
    ['轴线', 0, 'r'], ['墙', 0, 'd'], ['墙(Q)', 1, 'sel'], ['保温墙(Q)', 1], ['墙垛(E)', 1], ['幕墙(Q)', 1],
    ['门窗洞', 0, 'r'], ['柱', 0, 'r'], ['梁', 0, 'r'], ['板', 0, 'r'], ['楼梯', 0, 'r'], ['装修', 0, 'r'],
    ['土方', 0, 'r'], ['基础', 0, 'r'], ['其它', 0, 'r'], ['自定义', 0, 'r']
  ]
  document.getElementById('nav-tree').innerHTML = nav.map(n => {
    if (n[1] == 1) {
      return '<div class="h-[16px] flex items-center pl-[11px]"><span class="h-[16px] w-[31px] border-l border-dotted border-[#888] flex items-center"><span class="w-[29px] border-t border-dotted border-[#888]"></span></span>' + wallIcon +
        '<span class="ml-[3px] h-[15px] flex items-center px-[1px] ' + (n[2] == 'sel' ? 'bg-[#e2e2e2]' : '') + '">' + lat(n[0]) + '</span></div>'
    }
    return '<div class="h-[16px] flex items-center pl-[5px]"><span class="w-[10px] flex justify-center">' + (n[2] == 'd' ? chevDown : chevRight) + '</span><span class="ml-[6px]">' + folder + '</span><span class="ml-[8px]">' + n[0] + '</span></div>'
  }).join('')

  // 做法刷 tree: label, depth, state, arrow
  let tree = []
  ;['第5层', '第4层', '第3层', '第2层'].forEach(f => {
    tree.push([f, 0, 1, 'd'], ['墙', 1, 1, 'd'], ['墙', 2, 1, 'd'], ['Q-1[内墙]', 3, 1, ''])
  })
  tree.push(['首层', 0, 2, 'd'], ['墙', 1, 2, 'd'], ['墙', 2, 2, 'd'], ['Q-1[外墙]', 3, 1, ''], ['Q-1-1[内墙]', 3, 0, ''],
    ['柱', 1, 0, 'r'], ['梁', 1, 0, 'r'], ['门窗洞', 1, 0, 'r'], ['装修', 1, 0, 'r'], ['其它', 1, 0, 'r'], ['基础层', 0, 0, 'r'])
  const indent = ['pl-[8px]', 'pl-[27px]', 'pl-[46px]', 'pl-[65px]']
  document.getElementById('brush-tree').innerHTML = tree.map((t, i) => {
    const arrow = t[3] == 'd' ? chevDown : t[3] == 'r' ? chevRight : '<span class="w-[10px] border-t border-dotted border-[#777]"></span>'
    const hi = i == 3 ? 'bg-[#cfe6fb]' : ''
    return '<div class="h-[16px] flex items-center ' + indent[t[1]] + '"><span class="w-[14px] flex items-center">' + arrow + '</span><span class="ml-[2px]">' + box(t[2]) + '</span><span class="ml-[2px] h-[15px] pr-[4px] flex items-center ' + hi + '">' + t[0] + '</span></div>'
  }).join('')

  // property grids
  const blue = 'text-[#0000e0]'
  const props = [
    ['类别', '砖墙', 0, 1], ['材质', '砖', 0, 1], ['砂浆标号', '(M7.5)', 0, 1], ['砂浆类型', '(水泥砂浆', 0, 1],
    ['厚度(mm)', '240', 0, 1], ['内/外墙标', '内墙', 1, 1], ['工艺', '清水', 0, 1], ['轴线距左墙', '(120)', 0, 0],
    ['起点顶标高', '层顶标高', 0, 0], ['起点底标高', '层底标高', 0, 0], ['终点顶标高', '层顶标高', 0, 0], ['终点底标高', '层底标高', 0, 0],
    ['是否为人防', '否', 0, 1], ['备注', '', 0, 1]
  ]
  const line = 'border-r border-b border-[#c4c4c4]'
  function propHead(w3) {
    return '<div class="h-[21px] ' + line + ' bg-[#f4f4f4] flex items-center pl-[3px]">属性名称</div>' +
      '<div class="h-[21px] ' + line + ' bg-gradient-to-b from-[#fbdc9f] to-[#f3bb62] flex items-center pl-[2px] text-[#4b0082]">属性值</div>' +
      '<div class="h-[21px] ' + line + ' bg-[#f4f4f4] flex items-center pl-[1px] overflow-hidden">' + w3 + '</div>'
  }
  function propRow(p) {
    return '<div class="h-[21px] ' + line + ' flex items-center pl-[20px] ' + (p[3] ? blue : '') + '"><span>' + lat(p[0]) + '</span></div>' +
      '<div class="h-[21px] ' + line + ' flex items-center pl-[2px] overflow-hidden whitespace-nowrap"><span>' + lat(p[1]) + '</span></div>' +
      '<div class="h-[21px] ' + line + ' flex items-center pl-[2px]">' + box(p[2]) + '</div>'
  }
  function extraRow(label) {
    return '<div class="h-[19px] ' + line + ' flex items-center pl-[3px]"><span class="w-[12px] h-[12px] border border-[#aaa] flex items-center justify-center text-[11px] mr-[5px]">+</span>' + label + '</div>' +
      '<div class="h-[19px] ' + line + '"></div><div class="h-[19px] ' + line + '"></div>'
  }
  document.getElementById('prop-main').innerHTML = '<div class="grid grid-cols-[84px_65px_30px]">' + propHead('附加') +
    '<div class="h-[21px] ' + line + ' flex items-center pl-[20px] ' + blue + '">名称</div><div class="h-[21px] ' + line + ' bg-[#d6e8f7] flex items-center pl-[2px]">' + lat('Q-2') + '</div><div class="h-[21px] ' + line + '"></div>' +
    props.map(propRow).join('') + extraRow('计算属性') + extraRow('显示样式') + '</div>'
  document.getElementById('prop-dialog').innerHTML = '<div class="grid grid-cols-[84px_64px_14px]">' + propHead('附') +
    '<div class="h-[21px] ' + line + ' flex items-center pl-[20px] ' + blue + '">名称</div><div class="h-[21px] ' + line + ' bg-[#d6e8f7] flex items-center pl-[2px]">' + lat('Q-1') + '</div><div class="h-[21px] ' + line + '"></div>' +
    props.slice(0, 4).map(p => propRow([p[0], p[1], 0, 1])).join('') + '</div>'

  // top quantity grid
  const tl = 'border-r border-b border-[#b4bac0]'
  const heads = ['编码', '类别', '项目名称', '项目特征', '单位', '工程量表达式', '表达式说明', '单价', '综合单价', '措施项目', '专业']
  function cells(bg, first) {
    return first.map(c => '<div class="h-[19px] pt-[1px] ' + tl + ' ' + (c[2] || bg) + ' flex items-center ' + (c[1] || 'pl-[2px]') + ' whitespace-nowrap overflow-hidden">' + c[0] + '</div>').join('')
  }
  const minus = '<span class="w-[11px] h-[11px] bg-white border border-[#999] flex items-center justify-center mr-[5px] ml-[2px]"><span class="w-[7px] h-[1px] bg-black"></span></span>'
  const topRow = (n, code, kind, name, price, major, bgNum, bg, codeBg) => cells(bg, [
    [n, 'justify-center text-[#4b0082]', bgNum], [code, 'pl-[1px]', codeBg], [kind, 'justify-center'], [lat(name)], [''], [lat('m3'), 'justify-center'],
    [lat('TJ')], [lat('TJ') + '&lt;体积&gt;'], [lat(price), 'justify-end pr-[2px]'], [''], [box(0), 'justify-center'], [major, 'justify-center']
  ])
  document.getElementById('top-grid').innerHTML =
    '<div class="h-[20px] ' + tl + ' bg-[#f4f4f4]"></div>' +
    heads.map(h => '<div class="h-[20px] ' + tl + ' bg-gradient-to-b from-[#fbdc9f] to-[#f3bb62] flex items-center justify-center text-[#4b0082]">' + h + '</div>').join('') +
    topRow('1', minus + lat('010402001'), '项', '砌块墙', '', '房屋建筑与装饰', 'bg-[#9ac2e8]', 'bg-[#8fd5f3]', 'bg-[#aee7f8]') +
    topRow('2', '<span class="pl-[21px]">' + lat('01040009') + '</span>', '定', '混水砖墙&nbsp;&nbsp;1砖', '952.82', '土', 'bg-[#9ac2e8]', 'bg-[#b2d4ef]', 'bg-[#b2d4ef]')

  // dialog grid
  const dl = 'border-r border-b border-[#b8b8b8]'
  const dHeads = ['编码', '类别', '项目名称', '单位', '工程量表达式', '表达式说明', '单价']
  const dRow = (n, code, kind, name, price, numBg) =>
    '<div class="h-[19px] ' + dl + ' ' + numBg + ' flex items-center justify-center">' + n + '</div>' +
    [[code, 'pl-[2px]'], [kind, 'pl-[2px]'], [lat(name), 'pl-[2px]'], [lat('m3'), 'pl-[2px]'], [lat('TJ'), 'pl-[2px]'], [lat('TJ') + '&lt;体积&gt;', 'pl-[2px]'], [lat(price), 'justify-end']]
      .map(c => '<div class="h-[19px] ' + dl + ' bg-[#008080] flex items-center ' + c[1] + ' whitespace-nowrap overflow-hidden">' + c[0] + '</div>').join('')
  document.getElementById('brush-grid').innerHTML =
    '<div class="h-[20px] ' + dl + ' bg-[#f4f4f4]"></div>' +
    dHeads.map((h, i) => '<div class="h-[20px] ' + dl + ' ' + (i == 0 ? 'bg-gradient-to-b from-[#fbdc9f] to-[#f3bb62] text-[#4b0082]' : 'bg-[#f6f6f6]') + ' flex items-center justify-center">' + h + '</div>').join('') +
    dRow('1', minus + lat('010402001'), '项', '砌块墙', '', 'bg-[#f9cf87] text-[#4b0082]') +
    dRow('2', '<span class="pl-[29px]">' + lat('01040009') + '</span>', '定', '混水砖墙&nbsp;&nbsp;1砖', '952.', 'bg-[#f8f8f8]')

  // grid rows peeking out from under the dialog
  let low = ''
  for (let i = 0; i < 21; i++) {
    low += '<div class="h-[19px] border-r border-b border-[#c4c4c4] ' + (i == 1 ? 'bg-[#f9cf87]' : 'bg-[#f4f4f4]') + '"></div><div class="h-[19px] border-r border-b border-[#c4c4c4]"></div>'
  }
  document.getElementById('low-grid').innerHTML = low
</script>
</body>
</html>
